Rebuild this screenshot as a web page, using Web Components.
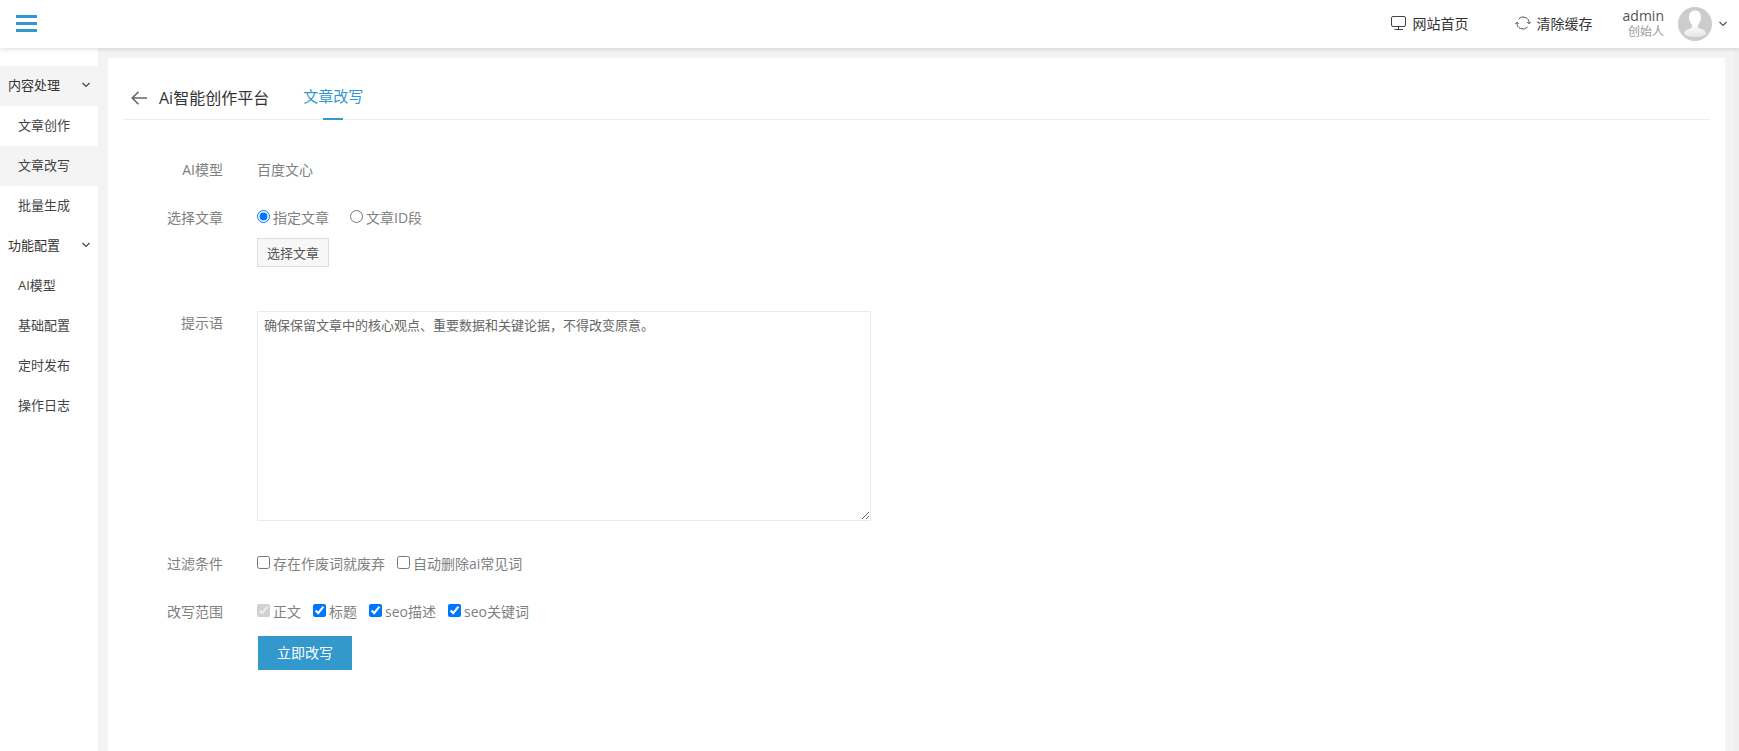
<!DOCTYPE html>
<html lang="zh-CN">
<head>
<meta charset="utf-8">
<meta name="viewport" content="width=device-width, initial-scale=1">
<title>Ai智能创作平台</title>
<style>
  html, body {
    height: 100%;
  }
  body {
    margin: 0;
    background: #f3f3f3;
    color: #808080;
    font: 400 14px/20px "Open Sans", "Noto Sans CJK SC", sans-serif;
    --primary: #3398cc;
    --soft: #f4f4f4;
    --line: #eee;
  }
</style>
</head>
<body>
<admin-shell>
  <top-bar slot="header" user="admin" role-name="创始人">
    <top-link href="#home">
      <svg slot="icon" width="16" height="16" viewBox="0 0 16 16" fill="none" stroke="#444">
        <rect x="0.5" y="1.5" width="14" height="10" rx="1.5"/>
        <path d="M7.500 11.500V14.500M3.500 14.500H12"/>
      </svg>
      网站首页
    </top-link>
    <top-link href="#clear-cache">
      <svg slot="icon" width="16" height="16" viewBox="0 0 16 16" fill="none" stroke="#555">
        <path d="M3.500 4A6 6 0 0 1 14 8.500M12.500 12A6 6 0 0 1 2 7.500"/>
        <path d="M0.300 9L2 7.200L3.700 9M12.300 7L14 8.800L15.700 7"/>
      </svg>
      清除缓存
    </top-link>
  </top-bar>

  <side-menu slot="side">
    <menu-group name="内容处理" active>
      <menu-item href="#create">文章创作</menu-item>
      <menu-item href="#rewrite" active>文章改写</menu-item>
      <menu-item href="#batch">批量生成</menu-item>
    </menu-group>
    <menu-group name="功能配置">
      <menu-item href="#model">AI模型</menu-item>
      <menu-item href="#basic">基础配置</menu-item>
      <menu-item href="#schedule">定时发布</menu-item>
      <menu-item href="#log">操作日志</menu-item>
    </menu-group>
  </side-menu>

  <page-head name="Ai智能创作平台" tab="文章改写"></page-head>
  <rewrite-form></rewrite-form>
</admin-shell>

<script>
const CHEVRON = `<svg width="8" height="6" viewBox="0 0 8 6" fill="none" stroke="currentColor" stroke-width="1.200"><path d="M0.500 1L4 4.500L7.500 1"/></svg>`;

class BaseElement extends HTMLElement {
  constructor() {
    super();
    this.attachShadow({ mode: 'open' });
  }

  connectedCallback() {
    this.shadowRoot.innerHTML = this.render();
  }

  attr(name) {
    return this.getAttribute(name) || '';
  }
}

class AdminShell extends BaseElement {
  render() {
    return `
      <style>
        :host {
          display: flex;
          flex-direction: column;
          min-height: 100%;
        }
        header {
          position: relative;
          z-index: 1;
          background: #fff;
          box-shadow: 0 1px 5px rgba(0, 0, 0, .15);
        }
        .body {
          display: flex;
          flex: 1;
        }
        nav {
          flex: none;
          width: 98px;
          padding-top: 18px;
          background: #fff;
        }
        main {
          flex: 1;
          min-width: 0;
          margin: 10px 10px 0;
          padding: 16px 15px 0;
          background: #fff;
        }
        .track {
          flex: none;
          width: 4px;
          background: #efefef;
        }
      </style>
      <header><slot name="header"></slot></header>
      <div class="body">
        <nav><slot name="side"></slot></nav>
        <main><slot></slot></main>
        <div class="track"></div>
      </div>
    `;
  }
}

class TopBar extends BaseElement {
  render() {
    return `
      <style>
        :host {
          display: flex;
          align-items: center;
          height: 48px;
          padding: 0 12px 0 16px;
        }
        button {
          padding: 0;
          border: 0;
          background: none;
          font: inherit;
          color: #555;
          cursor: pointer;
        }
        .toggle {
          display: grid;
          gap: 4px;
          width: 21px;
          margin-right: auto;
          padding-bottom: 2px;
        }
        .toggle span {
          height: 3px;
          background: var(--primary);
        }
        .links {
          display: flex;
          gap: 46px;
          margin-right: 30px;
        }
        .account {
          display: flex;
          align-items: center;
        }
        .who {
          display: grid;
          line-height: 16px;
          text-align: right;
        }
        .who small {
          font-size: 12px;
          color: #999;
        }
        .avatar {
          margin: 0 7px 0 14px;
        }
      </style>
      <button class="toggle" type="button" aria-label="菜单"><span></span><span></span><span></span></button>
      <div class="links"><slot></slot></div>
      <button class="account" type="button">
        <span class="who"><span>${this.attr('user')}</span><small>${this.attr('role-name')}</small></span>
        <svg class="avatar" width="34" height="34" viewBox="0 0 34 34">
          <defs>
            <linearGradient id="face" x1="0" y1="0" x2="0" y2="1">
              <stop offset="0.500" stop-color="#fff"/>
              <stop offset="1" stop-color="#e6e6e6"/>
            </linearGradient>
          </defs>
          <circle cx="17" cy="17" r="17" fill="#ccc"/>
          <path fill="url(#face)" d="M17 3.500C13.300 3.500 11 6 11 10C11 13 12 15.500 13.500 17.200C14.300 18.200 14.500 20.500 13 21.200C9.500 22.300 6 23.300 6 26.800C8 29 12 30 17 30S26 29 28 26.800C28 23.300 24.500 22.300 21 21.200C19.500 20.500 19.700 18.200 20.500 17.200C22 15.500 23 13 23 10C23 6 20.700 3.500 17 3.500Z"/>
        </svg>
        ${CHEVRON}
      </button>
    `;
  }
}

class TopLink extends BaseElement {
  render() {
    return `
      <style>
        :host { display: block; }
        a {
          display: flex;
          align-items: center;
          gap: 6px;
          color: #333;
          text-decoration: none;
        }
        ::slotted(svg) { margin-bottom: 2px; }
      </style>
      <a href="${this.attr('href')}"><slot name="icon"></slot><span><slot></slot></span></a>
    `;
  }
}

class SideMenu extends BaseElement {
  render() {
    return `
      <style>
        :host {
          display: block;
          font-size: 13px;
          line-height: 38px;
        }
      </style>
      <slot></slot>
    `;
  }
}

class MenuGroup extends BaseElement {
  render() {
    return `
      <style>
        :host { display: block; }
        button {
          display: flex;
          align-items: center;
          justify-content: space-between;
          width: 100%;
          height: 40px;
          padding: 0 8px 2px;
          border: 0;
          background: none;
          font: inherit;
          color: #333;
          cursor: pointer;
        }
        :host([active]) button { background: var(--soft); }
        svg { color: #444; }
      </style>
      <button type="button" aria-expanded="true"><span>${this.attr('name')}</span>${CHEVRON}</button>
      <div class="items"><slot></slot></div>
    `;
  }

  connectedCallback() {
    super.connectedCallback();
    const button = this.shadowRoot.querySelector('button');
    const items = this.shadowRoot.querySelector('.items');
    button.addEventListener('click', () => {
      items.hidden = !items.hidden;
      button.setAttribute('aria-expanded', String(!items.hidden));
    });
  }
}

class MenuItem extends BaseElement {
  render() {
    return `
      <style>
        :host { display: block; }
        a {
          display: block;
          padding: 0 0 2px 18px;
          color: #444;
          text-decoration: none;
        }
        :host([active]) a, a:hover { background: var(--soft); }
      </style>
      <a href="${this.attr('href')}"><slot></slot></a>
    `;
  }
}

class PageHead extends BaseElement {
  render() {
    return `
      <style>
        :host {
          display: flex;
          gap: 34px;
          height: 45px;
          padding-left: 8px;
          border-bottom: 1px solid var(--line);
        }
        a {
          display: flex;
          align-items: center;
          color: inherit;
          text-decoration: none;
        }
        .back {
          gap: 12px;
          padding-top: 2px;
        }
        h1 {
          margin: 0;
          font-size: 16px;
          font-weight: inherit;
          color: #333;
        }
        .tab {
          flex-direction: column;
          height: 46px;
          font-size: 15px;
          line-height: 44px;
          color: var(--primary);
        }
        .tab::after {
          content: "";
          width: 20px;
          height: 2px;
          background: var(--primary);
        }
      </style>
      <a class="back" href="#back">
        <svg width="16" height="14" viewBox="0 0 16 14" fill="none" stroke="#666" stroke-width="1.600"><path d="M7.500 0.800L1.200 7L7.500 13.200M1.200 7H16"/></svg>
        <h1>${this.attr('name')}</h1>
      </a>
      <a class="tab" href="#rewrite">${this.attr('tab')}</a>
    `;
  }
}

class FormRow extends BaseElement {
  render() {
    return `
      <style>
        :host {
          display: grid;
          grid-template-columns: 100px minmax(0, 1fr);
          column-gap: 34px;
        }
        .label { text-align: right; }
        .field {
          display: flex;
          flex-direction: column;
          align-items: flex-start;
        }
      </style>
      <div class="label"><slot name="label"></slot></div>
      <div class="field"><slot></slot></div>
    `;
  }
}

/* One radio or tick box with its text. */
class ChoiceOption extends BaseElement {
  render() {
    const on = this.hasAttribute('checked') ? 'checked' : '';
    const off = this.hasAttribute('disabled') ? 'disabled' : '';
    return `
      <style>
        :host { display: block; }
        label {
          display: flex;
          align-items: flex-start;
          gap: 3px;
        }
        input {
          width: 13px;
          height: 13px;
          margin: 2px 0 0;
        }
      </style>
      <label><input type="${this.attr('type') || 'checkbox'}" ${on} ${off}><span><slot></slot></span></label>
    `;
  }
}

class RewriteForm extends BaseElement {
  render() {
    return `
      <style>
        :host { display: block; }
        form {
          display: grid;
          gap: 28px;
          padding: 40px 0;
        }
        label { line-height: 24px; }
        .options {
          display: flex;
          flex-wrap: wrap;
          gap: 12px;
        }
        .radios { column-gap: 21px; }
        button {
          font: inherit;
          cursor: pointer;
        }
        .pick {
          height: 29px;
          margin: 10px 0 16px;
          padding: 0 9px;
          border: 1px solid #ddd;
          background: #f7f7f7;
          font-size: 13px;
          color: #555;
        }
        textarea {
          box-sizing: border-box;
          width: 614px;
          max-width: 100%;
          height: 210px;
          margin-bottom: 5px;
          padding: 3px 6px;
          border: 1px solid #e9e9e9;
          outline: 0;
          font: inherit;
          font-size: 13px;
          color: #666;
        }
        .submit {
          height: 34px;
          margin: 14px 1px 0;
          padding: 0 19px;
          border: 0;
          background: var(--primary);
          color: #fff;
        }
      </style>
      <form>
        <form-row>
          <span slot="label">AI模型</span>
          <span>百度文心</span>
        </form-row>
        <form-row>
          <span slot="label" id="source">选择文章</span>
          <div class="options radios" role="radiogroup" aria-labelledby="source">
            <choice-option type="radio" checked>指定文章</choice-option>
            <choice-option type="radio">文章ID段</choice-option>
          </div>
          <button class="pick" type="button">选择文章</button>
        </form-row>
        <form-row>
          <label slot="label" for="prompt">提示语</label>
          <textarea id="prompt">确保保留文章中的核心观点、重要数据和关键论据，不得改变原意。</textarea>
        </form-row>
        <form-row>
          <span slot="label" id="filter">过滤条件</span>
          <div class="options" role="group" aria-labelledby="filter">
            <choice-option>存在作废词就废弃</choice-option>
            <choice-option>自动删除ai常见词</choice-option>
          </div>
        </form-row>
        <form-row>
          <span slot="label" id="scope">改写范围</span>
          <div class="options" role="group" aria-labelledby="scope">
            <choice-option checked disabled>正文</choice-option>
            <choice-option checked>标题</choice-option>
            <choice-option checked>seo描述</choice-option>
            <choice-option checked>seo关键词</choice-option>
          </div>
          <button class="submit" type="button">立即改写</button>
        </form-row>
      </form>
    `;
  }
}

customElements.define('admin-shell', AdminShell);
customElements.define('top-bar', TopBar);
customElements.define('top-link', TopLink);
customElements.define('side-menu', SideMenu);
customElements.define('menu-group', MenuGroup);
customElements.define('menu-item', MenuItem);
customElements.define('page-head', PageHead);
customElements.define('form-row', FormRow);
customElements.define('choice-option', ChoiceOption);
customElements.define('rewrite-form', RewriteForm);
</script>
</body>
</html>
